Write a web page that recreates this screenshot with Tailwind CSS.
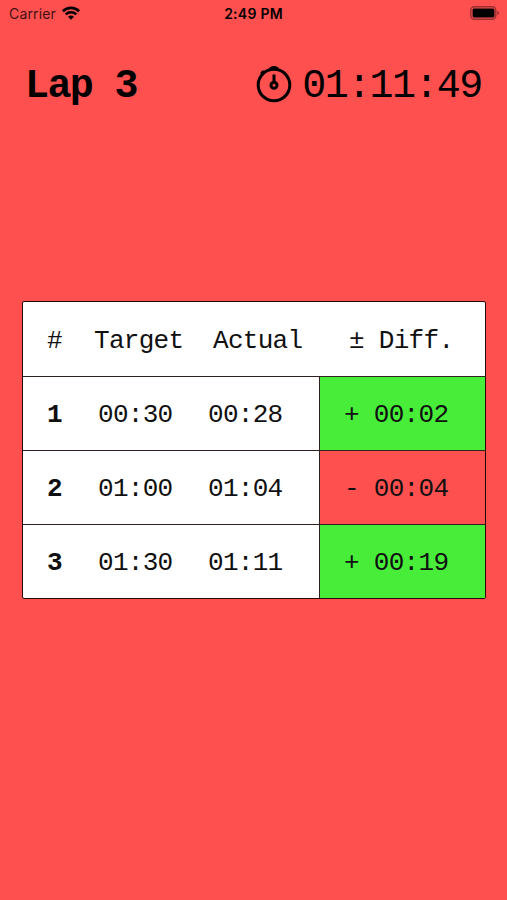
<!DOCTYPE html>
<html lang="en">
<head>
<meta charset="utf-8">
<title>Lap timer</title>
<script src="https://cdn.jsdelivr.net/npm/@tailwindcss/browser@4"></script>
</head>
<body class="bg-[#ff5050] text-black">
<div class="w-[507px] h-[900px] overflow-hidden flex flex-col bg-[#ff5050]">
  <header class="h-7 shrink-0 grid grid-cols-3 items-center pl-[9px] pr-[7px] font-['Inter','Liberation_Sans',sans-serif] text-[14px] leading-7">
    <div class="flex items-center gap-[6px] text-black/80">
      <span class="tracking-[0.15px]">Carrier</span>
      <svg class="w-[18px] h-[14px] -mt-[2px] text-black" viewBox="0 0 18 14" fill="none" stroke="currentColor" stroke-width="2.6"><path d="M.9 5.2C5.4.8 12.6.8 17.1 5.2"/><path d="M3.7 8.3c2.8-2.8 7.8-2.8 10.6 0"/><path d="M6 10.8c1.7-1.6 4.3-1.6 6 0L9 13.8Z" fill="currentColor" stroke="none"/></svg>
    </div>
    <div class="text-center font-semibold text-[14px] tracking-[0.25px] whitespace-nowrap -ml-[2px]">2:49 PM</div>
    <svg class="justify-self-end -mt-[2px] w-[30px] h-[14px]" viewBox="0 0 30 14"><rect x=".8" y=".7" width="25" height="12.6" rx="3.5" fill="none" stroke="#000" stroke-opacity=".4" stroke-width="1.4"/><rect x="2.6" y="2.5" width="21.8" height="9" rx="1.6"/><path d="M27.3 4.8q3.4 2.2 0 4.4z" fill-opacity=".45"/></svg>
  </header>
  <section class="h-[114px] shrink-0 flex items-center justify-between pl-[25px] pr-[27px] font-['Liberation_Mono',monospace] text-[40px] leading-[44px] tracking-[-1.6px] whitespace-nowrap">
    <h1 class="font-bold pt-[3px]">Lap 3</h1>
    <div class="flex items-center gap-[10px]">
      <svg class="w-[36px] h-[38px] -mt-[3px]" viewBox="0 0 36 38" fill="none" stroke="#000" stroke-width="3"><circle cx="18" cy="20" r="15.8"/><path d="M14.8 3.6Q18 1.6 21.2 3.6M6 8l1.2-1.2" stroke-linecap="round"/><path d="M18 9.5v8"/><circle cx="18" cy="20.3" r="3"/></svg>
      <span class="mr-[-1.6px] pt-[3px]">01:11:49</span>
    </div>
  </section>
  <main class="mt-[159px] ml-[22px] w-[464px] border-[1.5px] border-[#260808] rounded-[2px] bg-white font-['Liberation_Mono',monospace] text-[26px] leading-[30px] tracking-[-0.7px] whitespace-nowrap text-[#101010]">
    <div class="h-[75px] grid grid-cols-[71px_109px_131px_1fr] items-center border-b border-[#302020] pt-[3px]">
      <span class="pl-[24px]">#</span><span>Target</span><span class="pl-[10px]">Actual</span><span class="pl-[15px]">± Diff.</span>
    </div>
    <div class="h-[74px] grid grid-cols-[75px_110px_111px_1fr] items-center border-b border-[#302020]">
      <b class="pl-[24px] pt-[3px]">1</b><span class="pt-[3px]">00:30</span><span class="pt-[3px]">00:28</span><span class="h-full flex items-center border-l border-[#302020] bg-[#48ed3a] pt-[3px] pl-[24px]">+ 00:02</span>
    </div>
    <div class="h-[74px] grid grid-cols-[75px_110px_111px_1fr] items-center border-b border-[#302020]">
      <b class="pl-[24px] pt-[3px]">2</b><span class="pt-[3px]">01:00</span><span class="pt-[3px]">01:04</span><span class="h-full flex items-center border-l border-[#302020] bg-[#ff5050] pt-[3px] pl-[24px]">- 00:04</span>
    </div>
    <div class="h-[73px] grid grid-cols-[75px_110px_111px_1fr] items-center">
      <b class="pl-[24px] pt-[3px]">3</b><span class="pt-[3px]">01:30</span><span class="pt-[3px]">01:11</span><span class="h-full flex items-center border-l border-[#302020] bg-[#48ed3a] pt-[3px] pl-[24px]">+ 00:19</span>
    </div>
  </main>
</div>
</body>
</html>
